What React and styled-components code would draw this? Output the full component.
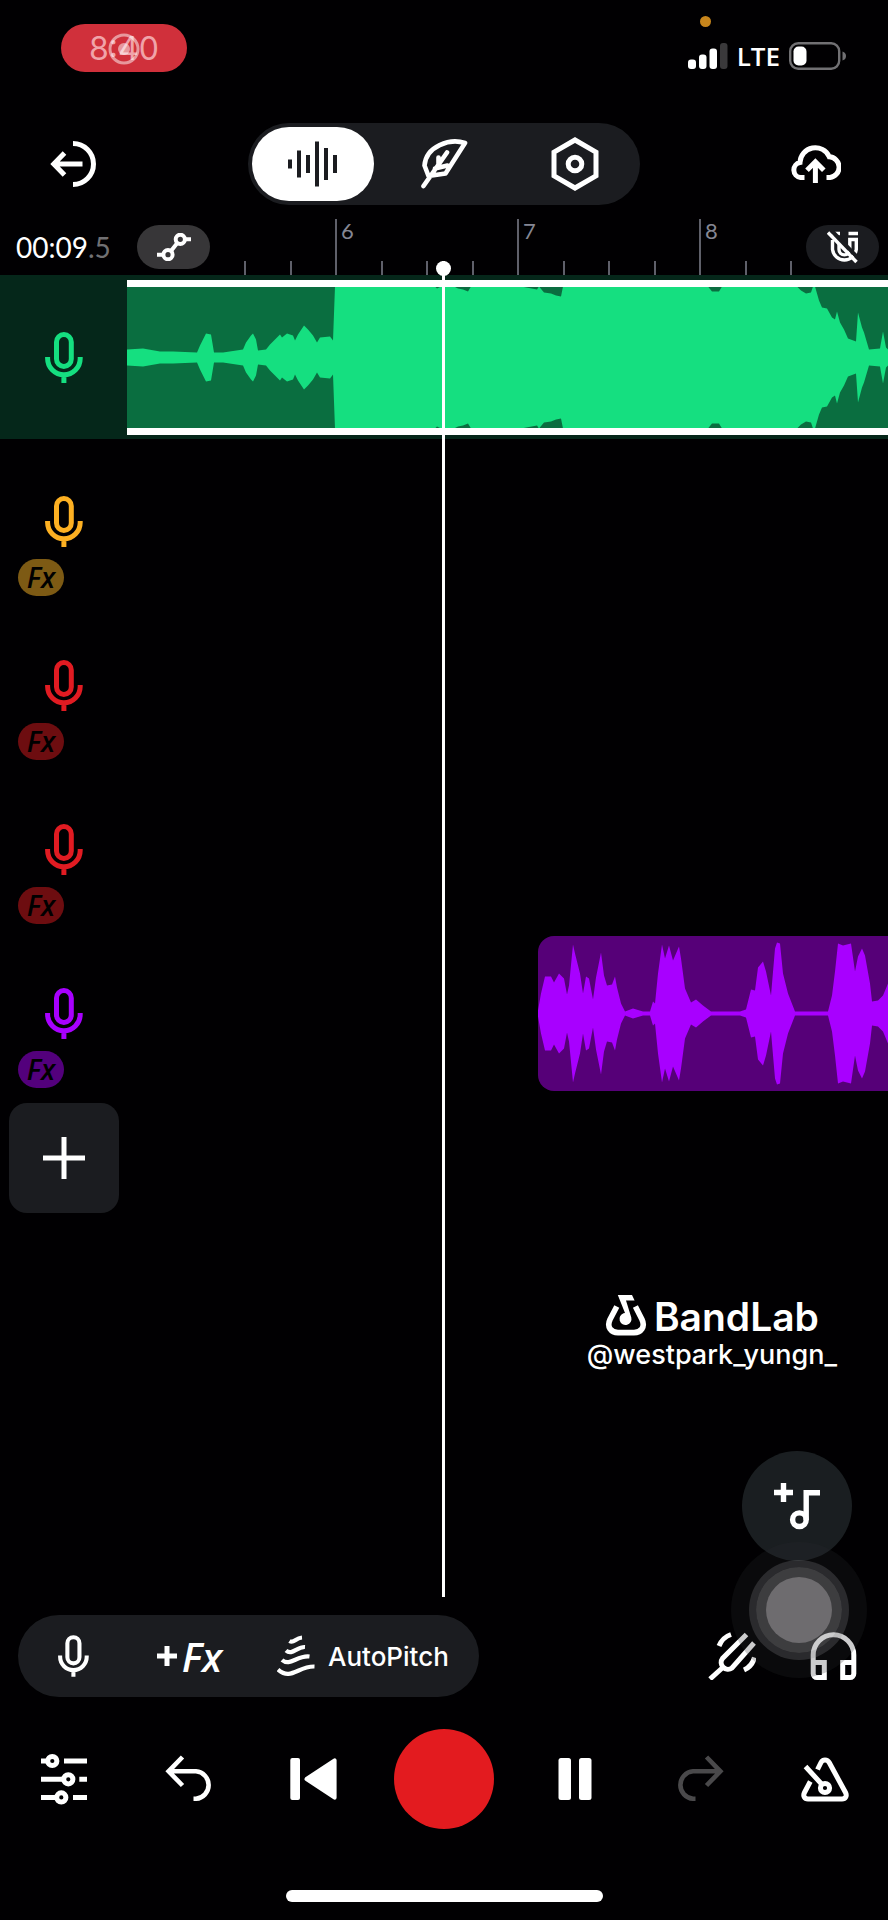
import styled, { createGlobalStyle } from "styled-components";

const beatTrack = [
  [0, 8], [16, 9], [33, 6], [46, 6], [70, 5], [73, 12], [79, 24], [84, 23], [87, 5],
  [96, 5], [116, 8], [119, 15], [124, 22], [126, 24], [129, 18], [131, 7], [139, 8],
  [143, 13], [148, 18], [153, 23], [155, 20], [160, 24], [166, 22], [168, 17],
  [171, 23], [177, 32], [181, 28], [186, 22], [190, 15], [193, 20], [203, 21],
  [206, 17], [208, 71], [308, 71], [310, 69], [314, 71], [327, 71], [331, 69],
  [336, 68], [341, 66], [344, 71], [394, 71], [410, 68], [412, 71], [417, 65],
  [424, 64], [429, 62], [434, 61], [436, 71], [581, 71], [585, 66], [592, 66],
  [595, 71], [670, 71], [674, 67], [679, 64], [684, 65], [686, 71], [688, 71],
  [692, 57], [695, 50], [700, 49], [705, 40], [708, 38], [710, 46], [713, 35],
  [717, 28], [721, 19], [729, 16], [731, 45], [735, 30], [737, 25], [742, 8],
  [753, 9], [756, 26], [759, 10], [761, 8],
];

const vocalTrack = [
  [0, 3], [3, 20], [7, 37], [13, 37], [16, 31], [21, 40], [26, 35], [29, 19],
  [31, 28], [35, 69], [37, 60], [42, 40], [45, 20], [48, 37], [51, 35], [55, 14],
  [58, 36], [63, 61], [66, 38], [69, 28], [74, 29], [77, 37], [79, 26], [83, 10],
  [87, 2], [95, 5], [105, 2], [112, 2], [115, 12], [117, 10], [120, 40], [124, 69],
  [127, 55], [131, 68], [135, 53], [141, 67], [143, 55], [147, 25], [153, 11],
  [158, 14], [165, 8], [173, 2], [202, 2], [208, 4], [213, 24], [217, 23],
  [220, 46], [225, 52], [228, 42], [233, 18], [234, 30], [237, 65], [239, 71],
  [242, 70], [245, 40], [250, 20], [257, 2], [290, 2], [294, 18], [297, 42],
  [300, 70], [305, 68], [313, 70], [317, 42], [320, 57], [324, 65], [327, 58],
  [332, 30], [334, 12], [340, 13], [345, 18], [350, 30],
];

const tracks = [
  {
    id: 1,
    color: "#15df80",
    selected: true,
    clip: { start: 0, body: "#0a6e40", length: 761, height: 141, wave: beatTrack },
  },
  { id: 2, color: "#fdb022", fx: "#7d5a14" },
  { id: 3, color: "#e11b22", fx: "#6d0d10" },
  { id: 4, color: "#e11b22", fx: "#6d0d10" },
  {
    id: 5,
    color: "#a800ff",
    fx: "#53007c",
    clip: { start: 411, body: "#560078", length: 350, height: 155, wave: vocalTrack },
  },
];

const bars = [
  { label: "", beats: 2, width: 91 },
  { label: "6", beats: 4, width: 182 },
  { label: "7", beats: 4, width: 182 },
  { label: "8", beats: 3, width: 137 },
];

const wavePath = (wave, height) => {
  const mid = height / 2;
  const top = wave.map(([x, amp]) => `${x} ${mid - amp}`);
  const bottom = [...wave].reverse().map(([x, amp]) => `${x} ${mid + amp}`);
  return `M${top.join("L")}L${bottom.join("L")}Z`;
};

const Icon = ({ w = 48, h = 48, view, stroke = 5, children }) => (
  <svg
    width={w}
    height={h}
    viewBox={view || `0 0 ${w} ${h}`}
    fill="none"
    stroke="currentColor"
    strokeWidth={stroke}
    aria-hidden="true"
  >
    {children}
  </svg>
);

const MicIcon = ({ w = 38, h = 51 }) => (
  <Icon w={w} h={h} view="0 0 38 51">
    <rect x="11.5" y="2.5" width="14.8" height="32" rx="7.4" />
    <path d="M2.6 25V26.5A16.3 16.3 0 0 0 35.2 26.5V25M18.9 43V51" />
  </Icon>
);

const UndoIcon = () => (
  <Icon stroke={4.6}>
    <path d="M4 16.3H31A13.8 13.8 0 0 1 31 43.8H28.5M17.5 2 3.6 16.3 17.5 30.5" />
  </Icon>
);

const RedoIcon = () => (
  <Icon stroke={4.6}>
    <path d="M44 16.3H17A13.8 13.8 0 0 0 17 43.8H19.5M30.5 2 44.4 16.3 30.5 30.5" />
  </Icon>
);

const Status = () => (
  <StatusBar>
    <Clock>
      <span>8:40</span>
      <RecordingMark width="32" height="32" viewBox="0 0 32 32" aria-hidden="true">
        <circle cx="16" cy="16" r="14" fill="none" stroke="#fff" strokeWidth="3" />
        <circle cx="16" cy="16" r="6" fill="#fff" />
      </RecordingMark>
    </Clock>
    <StatusRight>
      <MicInUse />
      <Signals>
        <svg width="40" height="26" viewBox="0 0 40 26" fill="#fff" aria-hidden="true">
          <rect x="0" y="16.5" width="8" height="9.5" rx="3" />
          <rect x="11" y="11.5" width="7.5" height="14.5" rx="3" />
          <rect x="21.5" y="5.5" width="7.5" height="20.5" rx="3" />
          <rect x="32" y="0" width="7.5" height="26" rx="3" fill="#3a393b" />
        </svg>
        <span>LTE</span>
        <svg width="58" height="28" viewBox="0 0 58 28" aria-hidden="true">
          <rect x="1.2" y="1.2" width="49" height="25.6" rx="8" fill="none" stroke="#717073" strokeWidth="2.4" />
          <rect x="4.5" y="4.5" width="13" height="19" rx="5" fill="#fff" />
          <path d="M53.5 9.5Q57 10.5 57 14T53.5 18.5Z" fill="#717073" />
        </svg>
      </Signals>
    </StatusRight>
  </StatusBar>
);

const Track = ({ track }) => {
  const { color, fx, selected, clip } = track;
  return (
    <TrackRow $selected={selected}>
      <TrackHead type="button" aria-label={`Track ${track.id}`} $color={color}>
        <MicIcon />
        {fx && <FxBadge $color={fx}>Fx</FxBadge>}
      </TrackHead>
      <Lane>
        {clip && (
          <Clip $body={clip.body} $start={clip.start} $selected={selected}>
            <svg
              width="100%"
              height="100%"
              viewBox={`0 0 ${clip.length} ${clip.height}`}
              preserveAspectRatio="none"
              fill={color}
              aria-hidden="true"
            >
              <path d={wavePath(clip.wave, clip.height)} />
            </svg>
          </Clip>
        )}
      </Lane>
    </TrackRow>
  );
};

const App = () => {
  return (
    <>
      <GlobalStyle />
      <Studio>
        <Status />
        <Header>
          <IconButton type="button" aria-label="Exit">
            <Icon>
              <path d="M24 3.5A20.5 20.5 0 0 1 24 44.5M33.5 24H4M15.5 13 4.8 24 15.5 35" />
            </Icon>
          </IconButton>
          <Tabs aria-label="Views">
            <Tab type="button" aria-label="Tracks" aria-pressed="true" $active>
              <Icon w={50} h={48} stroke={4}>
                <path d="M2 19.5V28.5M11 10.5V37.5M20 15V33M29 1.5V46.5M38 8V40M47 15V33" />
              </Icon>
            </Tab>
            <Tab type="button" aria-label="Lyrics" aria-pressed="false">
              <Icon w={48} h={52} stroke={4.6}>
                <path
                  d="M45 5C30 0 6 8 4.5 27.5L8.5 38 25.5 35.5ZM3.5 48 27 14.5M18.5 19.5V27M15 30.5 27.5 27.5"
                  strokeLinejoin="round"
                  strokeLinecap="round"
                />
              </Icon>
            </Tab>
            <Tab type="button" aria-label="Settings" aria-pressed="false">
              <Icon w={48} h={54}>
                <path d="M24 3 45 15.2V38.8L24 51 3 38.8V15.2Z" />
                <circle cx="24" cy="27" r="6.8" />
              </Icon>
            </Tab>
          </Tabs>
          <IconButton type="button" aria-label="Save to cloud">
            <Icon w={51} h={44}>
              <path d="M14.5 35.5H10.5A7.6 7.6 0 0 1 10 20.5A15.3 15.3 0 0 1 39.3 14.8A10.4 10.4 0 0 1 40 35.5H36.5M25.4 41V20M17 28.3 25.4 19.8 33.8 28.3" />
            </Icon>
          </IconButton>
        </Header>

        <Timeline>
          <RulerRow>
            <Time>
              00:09<span>.5</span>
            </Time>
            <PillButton type="button" aria-label="Automation" $bg="#373638">
              <Icon w={34} h={28} stroke={4}>
                <path d="M0 21.7H6M28 6.2H34M14 18 20.3 10" />
                <circle cx="11" cy="21.7" r="4.6" />
                <circle cx="23.3" cy="6.3" r="4.6" />
              </Icon>
            </PillButton>
            <Ruler>
              {bars.map(({ label, beats, width }, i) => (
                <Bar key={i} $width={width}>
                  {Array.from({ length: beats }, (_, beat) => (
                    <Beat key={beat} $major={label && beat === 0}>
                      {beat === 0 && label}
                    </Beat>
                  ))}
                </Bar>
              ))}
            </Ruler>
            <PillButton type="button" aria-label="Snap to grid off" $bg="#1b1c20">
              <Icon w={32} h={33} stroke={3.4}>
                <path d="M5.5 2.5H13M21.5 2.5H31" />
                <path d="M5.5 9V18.5A12 12 0 0 0 29.3 18.5V8.5H22.8V18.5A5.4 5.4 0 0 1 12 18.5V13" />
                <path d="M4 -1 33 29" stroke="#1b1c20" strokeWidth="4" />
                <path d="M1 1.5 29.5 31" />
              </Icon>
            </PillButton>
          </RulerRow>

          {tracks.map((track) => (
            <Track key={track.id} track={track} />
          ))}

          <AddTrack type="button" aria-label="Add track">
            <Icon w={42} h={42}>
              <path d="M21 0V42M0 21H42" />
            </Icon>
          </AddTrack>

          <Watermark>
            <Brand>
              <svg width="42" height="44" viewBox="0 0 42 44" aria-hidden="true">
                <path
                  d="M11.8 12.5 5 25.5C1.5 33 6 38.6 13 38.6H29C36 38.6 40.5 33 37 25.5L30.4 12.5"
                  fill="none"
                  stroke="#fff"
                  strokeWidth="5.6"
                />
                <path d="M12.8 1H27L29.6 6.5H21L26.3 23.5A6 6 0 1 1 18.5 19.3L20 19Z" fill="#fff" />
              </svg>
              <span>BandLab</span>
            </Brand>
            <Handle>@westpark_yungn_</Handle>
          </Watermark>

          <AddSound type="button" aria-label="Add sound">
            <Icon w={48} h={48} stroke={5.4}>
              <path d="M10.5 1V20M1 10.5H20M33.2 38V10.7H47" />
              <circle cx="26.4" cy="37.7" r="6.8" />
            </Icon>
          </AddSound>

          <Playhead />
        </Timeline>

        <Dock>
          <Effects>
            <Effect type="button" aria-label="Input" $width={110}>
              <MicIcon w={31} h={42} />
            </Effect>
            <Effect type="button" $width={123}>
              <Icon w={20} h={20}>
                <path d="M10 0V20M0 10H20" />
              </Icon>
              <FxLabel>Fx</FxLabel>
            </Effect>
            <Effect type="button">
              <Icon w={38} h={42} stroke={4.2}>
                <path d="M12.5 6C17 9 18 3 25 2.5M9 15.5C15 21 20 11.5 28 12M5 25C13 32 20 20 32.5 21.5M1 34.5C14 46 21 31 37.5 31.5" />
              </Icon>
              <span>AutoPitch</span>
            </Effect>
          </Effects>
          <DockTools>
            <IconButton type="button" aria-label="Tuner">
              <Icon>
                <path d="M38.5 2.5 14.5 26.5A6.8 6.8 0 0 0 24 36L46 11M17 33.5 2 47M23 2.5C17 4.5 13 9 11 14M46.5 25.5C45 31 41.5 35.5 36 38" />
              </Icon>
            </IconButton>
            <IconButton type="button" aria-label="Monitoring">
              <Icon>
                <path d="M3.2 30.5V23A20.3 20.3 0 0 1 43.8 23V30.5M3.2 30.5H14.3V45.5H7A3.8 3.8 0 0 1 3.2 41.7ZM43.8 30.5H32.7V45.5H40A3.8 3.8 0 0 0 43.8 41.7Z" />
              </Icon>
            </IconButton>
            <AssistiveTouch>
              <TouchRing>
                <TouchCore />
              </TouchRing>
            </AssistiveTouch>
          </DockTools>
        </Dock>

        <Transport>
          <IconButton type="button" aria-label="Mixer">
            <Icon h={52}>
              <path d="M1 8H6M24 8H47M1 26.3H22M39.3 26.3H47M1 44.4H15M33 44.4H47" />
              <circle cx="12.3" cy="8" r="4.6" />
              <circle cx="28.3" cy="26.3" r="4.6" />
              <circle cx="21.3" cy="44.4" r="4.6" />
            </Icon>
          </IconButton>
          <IconButton type="button" aria-label="Undo">
            <UndoIcon />
          </IconButton>
          <IconButton type="button" aria-label="Back to start">
            <Icon stroke={4}>
              <rect x="0.3" y="3" width="9.7" height="42" rx="2" fill="currentColor" stroke="none" />
              <path d="M16.5 24 44.6 5.3V42.7Z" fill="currentColor" strokeLinejoin="round" />
            </Icon>
          </IconButton>
          <Record type="button" aria-label="Record" />
          <IconButton type="button" aria-label="Pause">
            <Icon stroke={0}>
              <rect x="7.5" y="3" width="12.5" height="42" rx="2.5" fill="currentColor" />
              <rect x="28" y="3" width="12.5" height="42" rx="2.5" fill="currentColor" />
            </Icon>
          </IconButton>
          <IconButton type="button" aria-label="Redo" disabled>
            <RedoIcon />
          </IconButton>
          <IconButton type="button" aria-label="Metronome">
            <Icon>
              <path d="M16.5 14.5 20 7.5C21.7 4 26.3 4 28.2 7.5L44.5 37.5C46.3 41 44.5 44 41 44H7C3.5 44 1.7 41 3.5 37.5L9.3 26.5M4.5 11.5 21 29.5" />
              <circle cx="24" cy="33" r="4.6" />
            </Icon>
          </IconButton>
        </Transport>

        <HomeIndicator />
      </Studio>
    </>
  );
};

export default App;

const GlobalStyle = createGlobalStyle`
  * {
    box-sizing: border-box;
  }

  body {
    margin: 0;
    background: #000;
  }

  button {
    border: 0;
    padding: 0;
    background: none;
    color: inherit;
    font: inherit;
    cursor: pointer;
  }

  svg {
    display: block;
    flex: none;
  }
`;

const Studio = styled.main`
  min-height: 100vh;
  display: flex;
  flex-direction: column;
  overflow: hidden;
  background: #010002;
  color: #fff;
  font-family: Inter, sans-serif;
  font-size: 26px;
`;

const StatusBar = styled.div`
  display: flex;
  justify-content: space-between;
  align-items: flex-start;
  height: 123px;
  padding: 16px 41px 0 61px;
`;

const Clock = styled.div`
  position: relative;
  display: grid;
  place-items: center;
  width: 126px;
  height: 48px;
  margin-top: 8px;
  border-radius: 24px;
  background: #d0303b;
  color: #f0a3a9;
  font-size: 32px;
`;

const RecordingMark = styled.svg`
  position: absolute;
  top: 9px;
  left: 47px;
  opacity: 0.5;
`;

const StatusRight = styled.div`
  display: flex;
  flex-direction: column;
  gap: 15px;
`;

const MicInUse = styled.div`
  width: 11px;
  height: 11px;
  margin-left: 12px;
  border-radius: 50%;
  background: #c7851c;
`;

const Signals = styled.div`
  display: flex;
  align-items: center;
  gap: 9px;
  height: 28px;
  font-family: "Open Sans", sans-serif;
  font-weight: 600;
`;

const Header = styled.header`
  display: flex;
  justify-content: space-between;
  align-items: center;
  padding: 0 47px 0 49px;
`;

const IconButton = styled.button`
  display: grid;
  place-items: center;

  &:disabled {
    color: #4a494b;
    cursor: default;
  }
`;

const Tabs = styled.nav`
  display: flex;
  gap: 9px;
  padding: 4px;
  border-radius: 41px;
  background: #1b1c20;
`;

const Tab = styled.button`
  display: grid;
  place-items: center;
  width: 122px;
  height: 74px;
  border-radius: 37px;
  background: ${({ $active }) => ($active ? "#fff" : "none")};
  color: ${({ $active }) => ($active ? "#1b1c20" : "#fff")};
`;

const Timeline = styled.section`
  position: relative;
  flex: 1;
  display: flex;
  flex-direction: column;
  margin-top: 14px;
`;

const RulerRow = styled.div`
  display: flex;
  align-items: center;
  height: 56px;
  padding: 0 9px 0 16px;
`;

const Time = styled.div`
  width: 121px;
  font-family: Lato, sans-serif;
  font-size: 28px;

  span {
    color: #717073;
  }
`;

const PillButton = styled.button`
  display: grid;
  place-items: center;
  flex: none;
  width: 73px;
  height: 44px;
  border-radius: 22px;
  background: ${({ $bg }) => $bg};
`;

const Ruler = styled.div`
  flex: 1;
  display: flex;
  align-self: stretch;
  min-width: 0;
  margin: 0 8px 0 34px;
`;

const Bar = styled.div`
  flex: none;
  display: flex;
  align-items: flex-end;
  width: ${({ $width }) => $width}px;
`;

const Beat = styled.div`
  flex: 1;
  height: ${({ $major }) => ($major ? 56 : 14)}px;
  padding-left: 4px;
  border-left: 2px solid #5f606a;
  color: #858794;
  font-family: Lato, sans-serif;
  font-size: 22px;
  line-height: 24px;
`;

const TrackRow = styled.div`
  display: flex;
  height: 164px;
  background: ${({ $selected }) => ($selected ? "#05271a" : "none")};
`;

const TrackHead = styled.button`
  display: flex;
  flex-direction: column;
  align-items: center;
  gap: 12px;
  width: 127px;
  padding-top: 57px;
  color: ${({ $color }) => $color};
`;

const FxBadge = styled.span`
  align-self: flex-start;
  width: 46px;
  height: 37px;
  margin-left: 18px;
  border-radius: 19px;
  background: ${({ $color }) => $color};
  color: #000;
  font-family: "Open Sans", sans-serif;
  font-size: 28px;
  font-style: italic;
  font-weight: 600;
  line-height: 36px;
  text-align: center;
`;

const Lane = styled.div`
  flex: 1;
  display: flex;
  padding: 5px 0 4px;
`;

const Clip = styled.div`
  flex: 1;
  margin-left: ${({ $start }) => $start}px;
  border: solid #fff;
  border-width: ${({ $selected }) => ($selected ? "7px 0" : "0")};
  border-radius: ${({ $selected }) => ($selected ? "0" : "16px 0 0 16px")};
  background: ${({ $body }) => $body};
  overflow: hidden;
`;

const AddTrack = styled.button`
  display: grid;
  place-items: center;
  width: 110px;
  height: 110px;
  margin: 8px 9px;
  border-radius: 18px;
  background: #1b1c20;
`;

const Watermark = styled.div`
  align-self: flex-end;
  margin: auto 51px 80px 0;
  font-weight: 500;
`;

const Brand = styled.div`
  display: flex;
  justify-content: center;
  gap: 7px;
  height: 44px;
  font-size: 39px;
  font-weight: 600;
  line-height: 46px;
`;

const Handle = styled.div`
  font-size: 27px;
  line-height: 33px;
  text-align: center;
`;

const AddSound = styled.button`
  align-self: flex-end;
  display: grid;
  place-items: center;
  width: 110px;
  height: 110px;
  margin: 0 36px 36px 0;
  border-radius: 50%;
  background: #1a1e21;
`;

const Playhead = styled.div`
  position: absolute;
  top: 42px;
  bottom: 0;
  left: calc(50% - 2px);
  width: 3px;
  background: #fff;

  &::before {
    content: "";
    position: absolute;
    top: 0;
    left: -6px;
    width: 15px;
    height: 15px;
    border-radius: 50%;
    background: #fff;
  }
`;

const Dock = styled.div`
  display: flex;
  justify-content: space-between;
  align-items: center;
  margin-top: 18px;
  padding: 0 30px 0 18px;
`;

const Effects = styled.div`
  display: flex;
  height: 82px;
  padding-right: 30px;
  border-radius: 41px;
  background: #1b1c20;
`;

const Effect = styled.button`
  display: flex;
  justify-content: center;
  align-items: center;
  gap: ${({ $width }) => ($width ? 5 : 13)}px;
  width: ${({ $width }) => ($width ? `${$width}px` : "auto")};
  padding-left: ${({ $width }) => ($width ? 0 : 26)}px;
  font-weight: 500;
`;

const FxLabel = styled.span`
  font-family: "Open Sans", sans-serif;
  font-size: 40px;
  font-style: italic;
  font-weight: 600;
`;

const DockTools = styled.div`
  position: relative;
  display: flex;
  gap: 54px;
`;

const AssistiveTouch = styled.div`
  position: absolute;
  right: -9px;
  bottom: 2px;
  display: grid;
  place-items: center;
  width: 136px;
  height: 136px;
  border-radius: 50%;
  background: rgba(42, 42, 46, 0.24);
`;

const TouchRing = styled.div`
  display: grid;
  place-items: center;
  width: 100px;
  height: 100px;
  border: 7px solid rgba(140, 138, 142, 0.25);
  border-radius: 50%;
  background: rgba(200, 198, 202, 0.27);
  background-clip: padding-box;
`;

const TouchCore = styled.div`
  width: 66px;
  height: 66px;
  border-radius: 50%;
  background: #6e6c6f;
`;

const Transport = styled.div`
  display: grid;
  grid-template-columns: repeat(3, 1fr) 136px repeat(3, 1fr);
  place-items: center;
  margin-top: 32px;
  padding-left: 1px;
`;

const Record = styled.button`
  width: 100px;
  height: 100px;
  border-radius: 50%;
  background: #e31b1f;
`;

const HomeIndicator = styled.div`
  align-self: center;
  width: 317px;
  height: 12px;
  margin: 61px 0 18px;
  border-radius: 6px;
  background: #fff;
`;
